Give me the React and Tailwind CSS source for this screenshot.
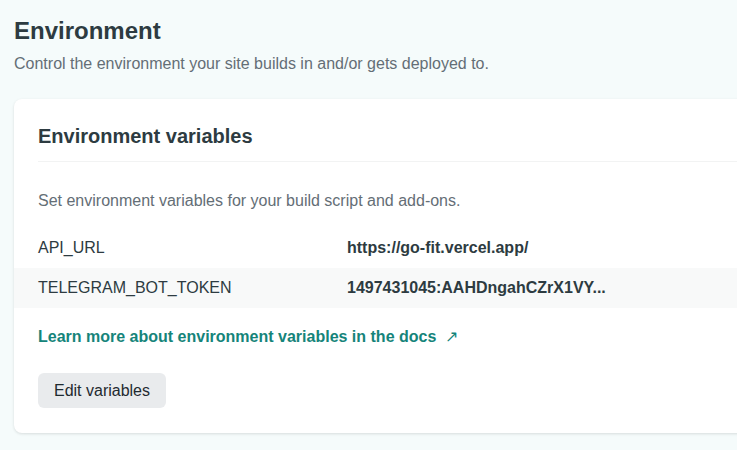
const vars = [
  { key: 'API_URL', value: 'https://go-fit.vercel.app/' },
  { key: 'TELEGRAM_BOT_TOKEN', value: '1497431045:AAHDngahCZrX1VY...' },
];

const App = () => {
  return (
    <div className="min-h-screen overflow-hidden bg-[#f5fbfb] pl-[14px] pt-[15px] font-['Liberation_Sans',Arial,sans-serif]">
      <h1 className="text-2xl leading-8 font-bold text-[#2d3b41]">Environment</h1>
      <p className="mt-[7px] text-base leading-5 text-[#646e76]">
        Control the environment your site builds in and/or gets deployed to.
      </p>

      <div className="mt-[25px] w-[800px] rounded-lg bg-white pt-[23px] pb-[25px] shadow-[0_1px_3px_rgba(0,0,0,0.12)]">
        <div className="pl-6">
          <h2 className="text-xl leading-7 font-bold text-[#2d3b41]">Environment variables</h2>
          <div className="mt-[11px] border-b border-[#f2f3f3]" />
          <p className="mt-[29px] text-base leading-5 text-[#646e76]">
            Set environment variables for your build script and add-ons.
          </p>
        </div>

        <div className="mt-[17px]">
          {vars.map((v, i) => (
            <div
              key={v.key}
              className={`flex h-10 items-center pl-6 text-base ${i % 2 === 1 ? 'bg-[#f8f9f9]' : ''}`}
            >
              <span className="w-[309px] text-[#2d3b41]">{v.key}</span>
              <span className="font-bold text-[#2d3b41]">{v.value}</span>
            </div>
          ))}
        </div>

        <div className="pl-6">
          <a href="#" className="mt-[19px] block text-base leading-5 font-bold text-[#15847a]">
            Learn more about environment variables in the docs <span className="ml-1 font-normal">↗</span>
          </a>
          <button className="mt-[26px] h-[35px] w-32 rounded-md bg-[#e9ebed] text-base text-[#1f2a30]">
            Edit variables
          </button>
        </div>
      </div>
    </div>
  );
};

export default App;
